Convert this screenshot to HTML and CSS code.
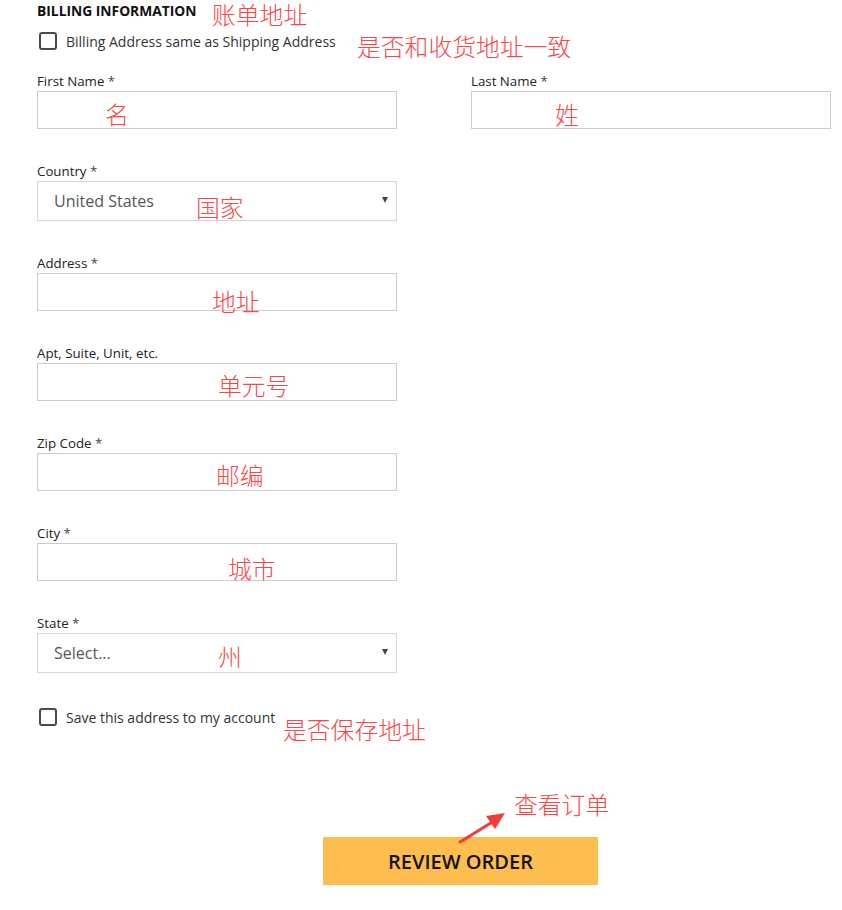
FILE: index.html
```html
<!DOCTYPE html>
<html>
<head>
<meta charset="utf-8">
<link rel="stylesheet" href="styles.css">
</head>
<body>
<div class="page">
  <form class="billing">
    <h2 class="title">BILLING INFORMATION</h2>
    <label class="check-row first-check"><span class="box"></span><span>Billing Address same as Shipping Address</span></label>

    <div class="row-two">
      <div class="field">
        <div class="label">First Name <span class="req">*</span></div>
        <div class="input"></div>
      </div>
      <div class="field">
        <div class="label">Last Name <span class="req">*</span></div>
        <div class="input"></div>
      </div>
    </div>

    <div class="field">
      <div class="label">Country <span class="req">*</span></div>
      <div class="select"><span>United States</span><span class="caret"></span></div>
    </div>

    <div class="field">
      <div class="label">Address <span class="req">*</span></div>
      <div class="input"></div>
    </div>

    <div class="field">
      <div class="label">Apt, Suite, Unit, etc.</div>
      <div class="input"></div>
    </div>

    <div class="field">
      <div class="label">Zip Code <span class="req">*</span></div>
      <div class="input"></div>
    </div>

    <div class="field">
      <div class="label">City <span class="req">*</span></div>
      <div class="input"></div>
    </div>

    <div class="field">
      <div class="label">State <span class="req">*</span></div>
      <div class="select"><span>Select...</span><span class="caret"></span></div>
    </div>

    <label class="check-row save-check"><span class="box"></span><span>Save this address to my account</span></label>

    <div class="actions">
      <button type="button" class="review">REVIEW ORDER</button>
    </div>
  </form>

  <span class="note n1">账单地址</span>
  <span class="note n2">是否和收货地址一致</span>
  <span class="note n3">名</span>
  <span class="note n4">姓</span>
  <span class="note n5">国家</span>
  <span class="note n6">地址</span>
  <span class="note n7">单元号</span>
  <span class="note n8">邮编</span>
  <span class="note n9">城市</span>
  <span class="note n10">州</span>
  <span class="note n11">是否保存地址</span>
  <span class="note n12">查看订单</span>
  <svg class="arrow" width="60" height="40" viewBox="0 0 60 40">
    <path d="M4 36 L38 15" stroke="#f63a3a" stroke-width="3" stroke-linecap="round" fill="none"/>
    <path d="M49 7 L30 10 L39 23 Z" fill="#f63a3a"/>
  </svg>
</div>
</body>
</html>
```

FILE: styles.css
```css
* { box-sizing: border-box; }

html, body {
  margin: 0;
  padding: 0;
  background: #fff;
}

body {
  font-family: "Open Sans", "Liberation Sans", sans-serif;
  color: #222;
}

.page {
  position: relative;
  width: 842px;
  height: 910px;
}

.billing {
  display: flex;
  flex-direction: column;
  padding-left: 37px;
}

.title {
  margin: 0;
  font-size: 13.8px;
  font-weight: 700;
  line-height: 22px;
  color: #111;
}

.check-row {
  display: flex;
  align-items: center;
  gap: 9px;
  font-size: 14px;
  color: #333;
  height: 18px;
  padding-left: 2px;
}

.first-check {
  margin-top: 10px;
  margin-bottom: 22px;
}

.box {
  width: 18px;
  height: 18px;
  border: 2px solid #4a4a4a;
  border-radius: 3px;
  flex: none;
}

.row-two {
  display: flex;
  gap: 74px;
}

.field {
  display: flex;
  flex-direction: column;
  width: 360px;
  margin-bottom: 33px;
}

.label {
  font-size: 13.3px;
  line-height: 18px;
  height: 18px;
  color: #222;
  margin-bottom: 1px;
}

.req {
  color: #444;
}

.input {
  height: 38px;
  border: 1px solid #cccccc;
  background: #fff;
}

.select {
  height: 40px;
  border: 1px solid #d5d5d5;
  display: flex;
  align-items: center;
  justify-content: space-between;
  padding: 0 8px 0 16px;
  font-size: 16px;
  color: #555;
}

.select span:first-child {
  margin-top: -1px;
}

.caret {
  width: 0;
  height: 0;
  border-left: 3px solid transparent;
  border-right: 3px solid transparent;
  border-top: 6px solid #444;
  margin-top: -2px;
}

.save-check {
  margin-top: 2px;
}

.actions {
  display: flex;
  padding-left: 286px;
  margin-top: 111px;
}

.review {
  width: 275px;
  height: 48px;
  border: none;
  background: #fdbd4f;
  font-family: "Open Sans", "Liberation Sans", sans-serif;
  font-size: 20px;
  font-weight: 600;
  color: #111;
  padding: 0;
  padding-top: 1px;
}

.note {
  position: absolute;
  font-family: "Noto Sans CJK SC", sans-serif;
  font-size: 23.8px;
  line-height: 1.2;
  color: #f54848;
  font-weight: 300;
  white-space: nowrap;
}

.n1 { left: 212px; top: 0px; }
.n2 { left: 357px; top: 32px; }
.n3 { left: 105px; top: 100px; }
.n4 { left: 555px; top: 100px; }
.n5 { left: 196px; top: 193px; }
.n6 { left: 212px; top: 287px; }
.n7 { left: 218px; top: 371px; }
.n8 { left: 216px; top: 461px; }
.n9 { left: 228px; top: 554px; }
.n10 { left: 218px; top: 642px; }
.n11 { left: 283px; top: 715px; }
.n12 { left: 514px; top: 790px; }

.arrow {
  position: absolute;
  left: 456px;
  top: 806px;
}
```
